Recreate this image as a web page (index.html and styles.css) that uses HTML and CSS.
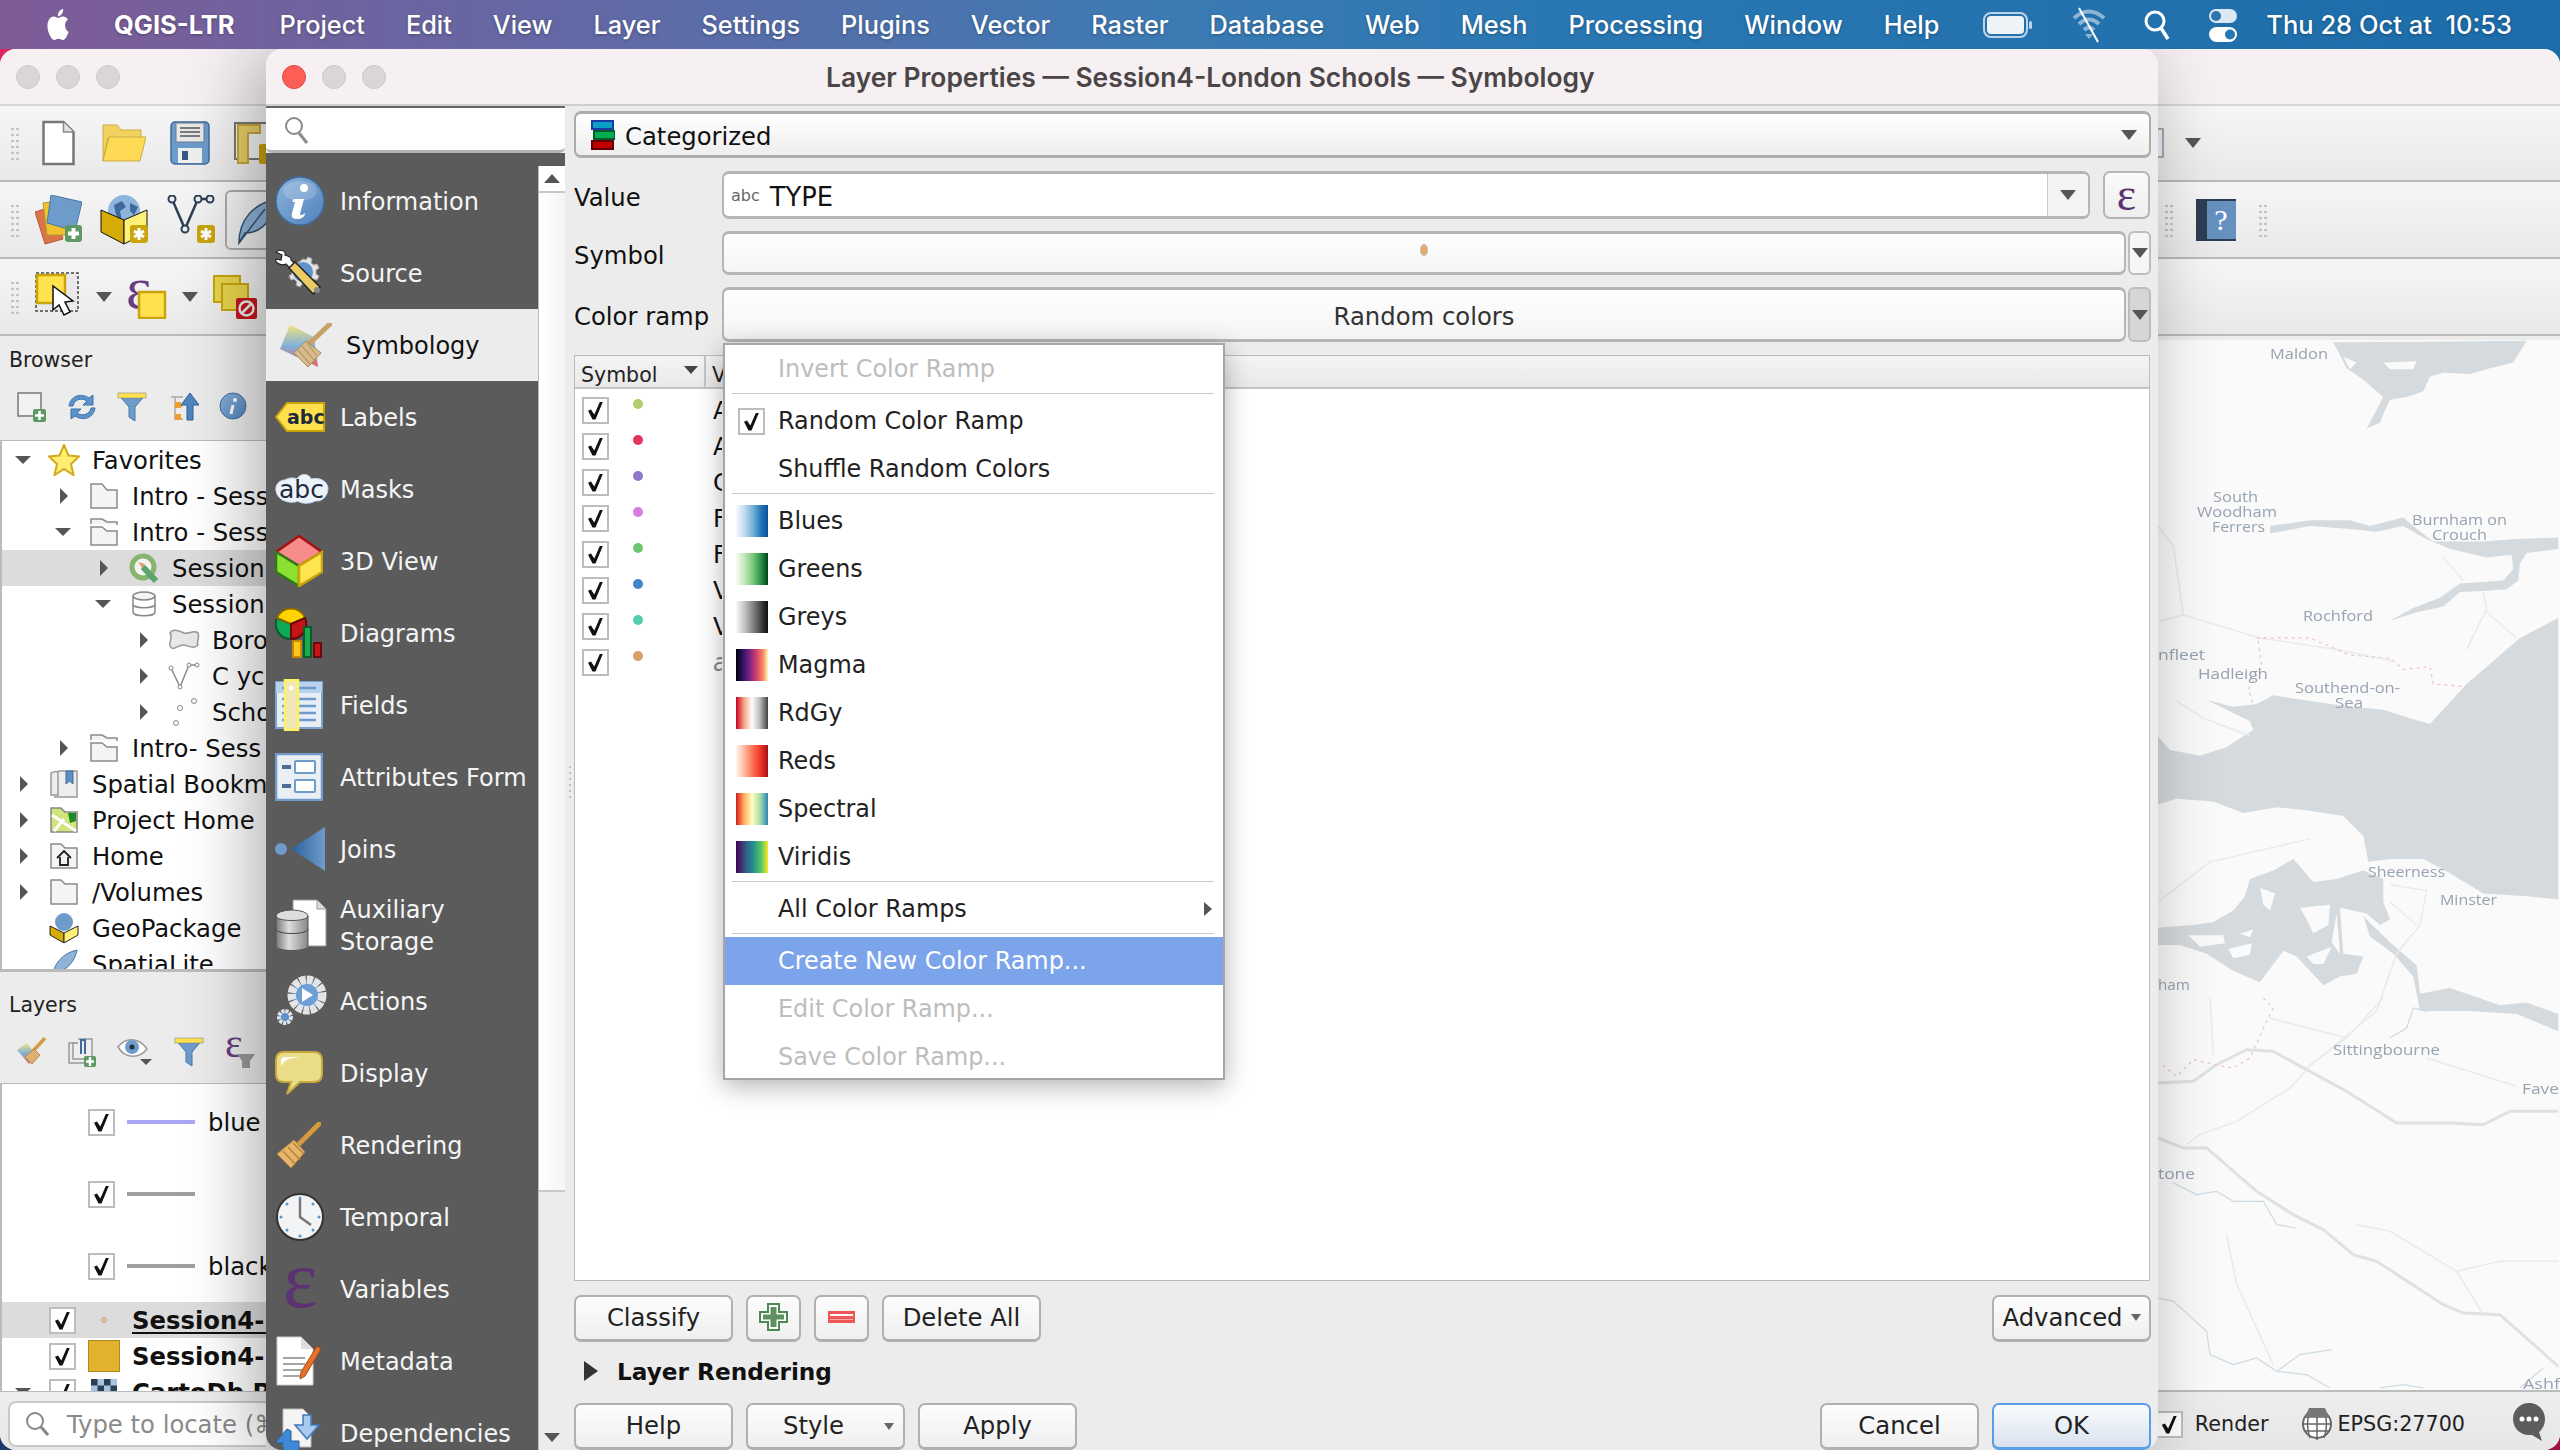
FILE: index.html
```html
<!DOCTYPE html>
<html lang="en">
<head>
<meta charset="utf-8">
<title>QGIS Layer Properties</title>
<link rel="stylesheet" href="styles.css">
</head>
<body>
<svg class="defs" width="0" height="0" aria-hidden="true">
  <defs>
    <linearGradient id="gBlue" x1="0" y1="0" x2="1" y2="1"><stop offset="0" stop-color="#8db4dc"/><stop offset="1" stop-color="#4f82bb"/></linearGradient>
    <linearGradient id="gJoin" x1="1" y1="0" x2="0" y2="0"><stop offset="0" stop-color="#6f9ccb"/><stop offset="1" stop-color="#2c5f98"/></linearGradient>
    <linearGradient id="gDb" x1="0" y1="0" x2="1" y2="0"><stop offset="0" stop-color="#777"/><stop offset=".4" stop-color="#ddd"/><stop offset="1" stop-color="#888"/></linearGradient>
    <linearGradient id="gWash" x1="0" y1="0" x2="0" y2="1"><stop offset="0" stop-color="#f3e27a"/><stop offset=".5" stop-color="#7fb0dc"/><stop offset="1" stop-color="#e8606a"/></linearGradient>
  </defs>
</svg>

<header class="menubar">
  <svg class="apple" width="26" height="31" viewBox="0 0 24 24" preserveAspectRatio="none"><path fill="#fff" d="M12.152 6.896c-.948 0-2.415-1.078-3.96-1.04-2.04.027-3.91 1.183-4.961 3.014-2.117 3.675-.546 9.103 1.519 12.09 1.013 1.454 2.208 3.09 3.792 3.039 1.52-.065 2.09-.987 3.935-.987 1.831 0 2.35.987 3.96.948 1.637-.026 2.676-1.48 3.676-2.948 1.156-1.688 1.636-3.325 1.662-3.415-.039-.013-3.182-1.221-3.22-4.857-.026-3.04 2.48-4.494 2.597-4.559-1.429-2.09-3.623-2.324-4.39-2.376-2-.156-3.675 1.09-4.61 1.09zM15.53 3.83c.843-1.012 1.4-2.427 1.245-3.83-1.207.052-2.662.805-3.532 1.818-.78.896-1.454 2.338-1.273 3.714 1.338.104 2.715-.688 3.559-1.701"/></svg>
  <span class="appname">QGIS-LTR</span>
  <nav class="menus">
    <span>Project</span><span>Edit</span><span>View</span><span>Layer</span><span>Settings</span><span>Plugins</span><span>Vector</span><span>Raster</span><span>Database</span><span>Web</span><span>Mesh</span><span>Processing</span><span>Window</span><span>Help</span>
  </nav>
  <div class="tray">
    <svg width="52" height="28" viewBox="0 0 52 28"><rect x="2" y="2" width="43" height="24" rx="7" fill="none" stroke="#bcd4ea" stroke-width="2"/><rect x="5" y="5" width="37" height="18" rx="4" fill="#eef3f8"/><rect x="47" y="10" width="3" height="8" rx="1.5" fill="#bcd4ea"/></svg>
    <svg width="34" height="36" viewBox="0 0 34 36"><path d="M2 11 Q17 -2 32 11M7 17 Q17 8 27 17M12 23 Q17 18 22 23" fill="none" stroke="#8fb4d4" stroke-width="4"/><path d="M17 32 l-4 -5 h8z" fill="#8fb4d4"/><path d="M7 1 L26 35" stroke="#fff" stroke-width="2"/></svg>
    <svg width="26" height="32" viewBox="0 0 26 32"><circle cx="11" cy="12" r="9" fill="none" stroke="#fff" stroke-width="3"/><path d="M17 19 L24 30" stroke="#fff" stroke-width="3.5"/></svg>
    <svg width="30" height="36" viewBox="0 0 30 36"><rect x="1" y="2" width="28" height="14" rx="7" fill="#dbe8f2"/><circle cx="8" cy="9" r="5" fill="#2a76b0"/><rect x="1" y="20" width="28" height="15" rx="7.5" fill="#fff"/><circle cx="22" cy="27.5" r="5" fill="#2a76b0"/></svg>
    <span class="clock">Thu 28 Oct at&nbsp; 10:53</span>
  </div>
</header>

<main class="mainwin">
  <div class="titlebar">
    <i class="light"></i><i class="light"></i><i class="light"></i>
  </div>

  <div class="tb tb-a">
    <i class="grip"></i>
    <svg width="36" height="46" viewBox="0 0 36 46"><path d="M1.5 2h20l10 10v32h-30z" fill="#fff" stroke="#777" stroke-width="2.5"/><path d="M21.500 2v10h10" fill="#e4e4e4" stroke="#888" stroke-width="1.500"/></svg>
    <svg width="44" height="40" viewBox="0 0 44 40"><path d="M1 38V2h14l4 5h20v8H6z" fill="#f2d25e" stroke="#c9ab45"/><path d="M1 38 7 14h37l-6 24z" fill="#ffdb55" stroke="#c9ab45"/></svg>
    <svg width="40" height="44" viewBox="0 0 40 44"><rect x="1" y="1" width="38" height="42" rx="4" fill="#6d9ccb" stroke="#3e6b9b" stroke-width="1.500"/><rect x="6" y="2" width="28" height="19" fill="#e8e8e8" stroke="#6a7c90"/><path d="M10 7h20M10 11h20M10 15h20" stroke="#555" stroke-width="1.500"/><rect x="8" y="27" width="24" height="15" fill="#f0f0f0"/><rect x="12" y="30" width="6" height="9" fill="#355a82"/></svg>
    <svg width="44" height="44" viewBox="0 0 44 44"><rect x="1" y="2" width="34" height="36" fill="#f4f4f4" stroke="#777" stroke-width="2"/><path d="M4 4h22v8H14v30H4z" fill="#e8cf68" stroke="#c9a43c" stroke-width="2"/><rect x="25" y="23" width="12" height="20" rx="2" fill="#c9a010"/></svg>
    <span class="tb-end tb-end-a"><i class="tb-box"></i><i class="tri"></i></span>
  </div>

  <div class="tb tb-b">
    <i class="grip"></i>
    <svg width="47" height="50" viewBox="0 0 47 50"><path d="M0 17 19 11 28 44 10 49z" fill="#d9734a" stroke="#b65a36"/><path d="M8 8 30 5 32 40 12 40z" fill="#eec32e" stroke="#b5952a"/><path d="M16 0 47 7 40 36 12 28z" fill="#6d9ccb" stroke="#4a77a6"/><rect x="30" y="30" width="17" height="17" rx="3" fill="#5e9865"/><path d="M38.500 33v11M33 38.500h11" stroke="#fff" stroke-width="4"/></svg>
    <svg width="48" height="50" viewBox="0 0 48 50"><circle cx="24" cy="16" r="16" fill="#8db4dc"/><path d="M14 10l8-4 4 6-6 4 2 10-6-6zM30 8l8 4-4 8-4-4z" fill="#3d6a9a"/><path d="M1 15 24 25v24L1 37z" fill="#d6ab06" stroke="#111"/><path d="M47 15 24 25v24l23-12z" fill="#fff07a" stroke="#111"/><rect x="30" y="30" width="18" height="18" rx="3" fill="#c9a40a"/><path d="M39 33v12M34 36l10 6M44 36l-10 6" stroke="#fff" stroke-width="3"/></svg>
    <svg class="m-v" width="48" height="50" viewBox="0 0 48 50"><path d="M5 4 18 34 31 4H43" fill="none" stroke="#2c3f55" stroke-width="2.500"/><circle cx="5" cy="4" r="3.500" fill="#eee" stroke="#2c3f55" stroke-width="2"/><circle cx="18" cy="34" r="3.500" fill="#eee" stroke="#2c3f55" stroke-width="2"/><circle cx="31" cy="4" r="3.500" fill="#eee" stroke="#2c3f55" stroke-width="2"/><circle cx="43" cy="4" r="3.500" fill="#eee" stroke="#2c3f55" stroke-width="2"/><rect x="30" y="30" width="18" height="18" rx="3" fill="#c9a40a"/><path d="M39 33v12M34 36l10 6M44 36l-10 6" stroke="#fff" stroke-width="3"/></svg>
    <span class="tb-pencil"><svg width="50" height="50" viewBox="0 0 50 50"><path d="M6 48C6 25 20 8 45 4 40 22 30 38 12 38z" fill="#8eb3d6" stroke="#33506e" stroke-width="1.500"/><path d="M6 48 32 14" stroke="#33506e" stroke-width="1.500"/></svg></span>
    <span class="tb-end tb-end-b"><i class="grip"></i><svg width="40" height="42" viewBox="0 0 40 42"><rect width="40" height="42" fill="#2c3e52"/><rect x="11" y="2" width="29" height="38" fill="#6690bf"/><text x="25" y="31" class="helpq">?</text></svg><i class="grip"></i></span>
  </div>

  <div class="tb tb-c">
    <i class="grip"></i>
    <svg width="46" height="50" viewBox="0 0 46 50"><rect x="1" y="1" width="42" height="38" fill="#e9e9e9" stroke="#444" stroke-width="1.500" stroke-dasharray="3 2"/><rect x="2" y="3" width="28" height="28" fill="#ffe24d" stroke="#c9a40a" stroke-width="2.500"/><path d="M18 15v24l6-5 5 10 6-3-5-10 8-1z" transform="translate(0 -1)" fill="#fff" stroke="#111" stroke-width="1.500"/></svg>
    <i class="tri"></i>
    <svg width="40" height="44" viewBox="0 0 40 44"><text x="-1" y="33" class="eps-lg">ε</text><rect x="12" y="17" width="26" height="26" fill="#ffe24d" stroke="#c9a40a" stroke-width="2.500"/></svg>
    <i class="tri"></i>
    <svg width="44" height="44" viewBox="0 0 44 44"><rect x="1" y="1" width="26" height="26" fill="#e8d64e" stroke="#c9a40a" stroke-width="2"/><rect x="9" y="9" width="26" height="26" fill="#e8d64e" stroke="#c9a40a" stroke-width="2"/><rect x="23" y="23" width="21" height="21" rx="2" fill="#c4161c"/><circle cx="33.500" cy="33.500" r="7" fill="none" stroke="#eee" stroke-width="2.500"/><path d="M29 38l9-9" stroke="#eee" stroke-width="2.500"/></svg>
  </div>

  <div class="workarea">
    <aside class="docks">
      <section class="dock dock-browser">
        <h2 class="dock-title">Browser</h2>
        <div class="dock-tools">
          <svg width="30" height="30" viewBox="0 0 30 30"><rect x="1" y="1" width="23" height="23" fill="#f2f2f2" stroke="#777" stroke-width="1.500"/><rect x="16" y="17" width="13" height="13" rx="2" fill="#5e9865"/><path d="M22.500 19v9M18 23.500h9" stroke="#fff" stroke-width="2.500"/></svg>
          <svg width="30" height="30" viewBox="0 0 30 30"><path d="M2 14C3 5 13 0 22 6l4-3v10H16l4-4C14 5 7 8 6 14zM28 16C27 25 17 30 8 24l-4 3V17h10l-4 4c6 4 13 1 14-5z" fill="#5b93cc" stroke="#3f72a8"/></svg>
          <svg width="30" height="30" viewBox="0 0 30 30"><path d="M1 2h28L18 15v14l-6-4V15z" fill="#6d9ccb" stroke="#4a77a6"/><rect x="1" y="1" width="28" height="5" fill="#ffe24d" stroke="#777" stroke-width=".5"/></svg>
          <svg width="32" height="30" viewBox="0 0 32 30"><path d="M4 5h12M8 5v22h8M8 14h8" fill="none" stroke="#aaa" stroke-width="1.500"/><rect x="8" y="10" width="6" height="6" fill="#f39c2c"/><rect x="8" y="22" width="6" height="6" fill="#f39c2c"/><path d="M14 13 23 1l9 12h-6v15h-6V13z" fill="#4f86bf" stroke="#2d5f94"/></svg>
          <svg width="28" height="28" viewBox="0 0 28 28"><circle cx="14" cy="14" r="13" fill="url(#gBlue)" stroke="#3f6c9e"/><circle cx="16" cy="8" r="2" fill="#fff"/><path d="M14 13 12 22" stroke="#fff" stroke-width="3"/></svg>
        </div>
        <div class="tree">
          <div class="row l0"><i class="ar-d"></i><span class="ri"><svg width="32" height="32" viewBox="0 0 32 32"><path d="M16 1l4.500 10.500L31 12.500l-8 7.500 2.500 11L16 25l-9.500 6L9 20l-8-7.500 10.500-1z" fill="#ffee70" stroke="#d4a81c" stroke-width="2"/></svg></span><span class="rt">Favorites</span></div>
          <div class="row l1"><i class="ar-r"></i><span class="ri"><svg width="28" height="26" viewBox="0 0 28 26"><path d="M1 25V1h11l5 6h10v18z" fill="#f4f4f4" stroke="#8a8a8a" stroke-width="1.500"/></svg></span><span class="rt">Intro - Sess</span></div>
          <div class="row l1"><i class="ar-d"></i><span class="ri"><svg width="28" height="28" viewBox="0 0 28 28"><path d="M1 6V1h11l5 3h10v3M1 27V9h11l5 4h10v14z" fill="#f4f4f4" stroke="#8a8a8a" stroke-width="1.500"/></svg></span><span class="rt">Intro - Sess</span></div>
          <div class="row l2 sel"><i class="ar-r"></i><span class="ri"><svg width="32" height="30" viewBox="0 0 32 30"><circle cx="15" cy="14" r="11" fill="#f4f4f4" stroke="#88b56e" stroke-width="5"/><path d="M10 9l7 2-2 5z" fill="#e39a6a"/><path d="M15 14 28 28" stroke="#5aa469" stroke-width="6"/></svg></span><span class="rt">Session</span></div>
          <div class="row l2"><i class="ar-d"></i><span class="ri"><svg width="26" height="26" viewBox="0 0 26 26"><ellipse cx="13" cy="5" rx="11" ry="4" fill="#f4f4f4" stroke="#888" stroke-width="1.500"/><path d="M2 5v16c0 5 22 5 22 0V5M2 13c0 5 22 5 22 0" fill="none" stroke="#888" stroke-width="1.500"/></svg></span><span class="rt">Session</span></div>
          <div class="row l3"><i class="ar-r"></i><span class="ri"><svg width="32" height="24" viewBox="0 0 32 24"><path d="M2 5C5 0 12 3 16 5c4 2 10-4 14 0 2 6-2 8 0 12-5 5-10 0-15 0S4 24 2 18C1 13 5 10 2 5z" fill="#e8e8e8" stroke="#999" stroke-width="1.500"/></svg></span><span class="rt">Boro</span></div>
          <div class="row l3"><i class="ar-r"></i><span class="ri"><svg width="32" height="28" viewBox="0 0 32 28"><path d="M3 6l9 19L21 3h8" fill="none" stroke="#8a8a8a" stroke-width="1.500"/><circle cx="3" cy="6" r="2" fill="#fff" stroke="#888"/><circle cx="12" cy="25" r="2" fill="#fff" stroke="#888"/><circle cx="21" cy="3" r="2" fill="#fff" stroke="#888"/><circle cx="29" cy="3" r="2" fill="#fff" stroke="#888"/></svg></span><span class="rt">C ycl</span></div>
          <div class="row l3"><i class="ar-r"></i><span class="ri"><svg width="30" height="28" viewBox="0 0 30 28"><circle cx="11" cy="10" r="2.500" fill="#fff" stroke="#888"/><circle cx="25" cy="3" r="2.500" fill="#fff" stroke="#888"/><circle cx="7" cy="25" r="2.500" fill="#fff" stroke="#888"/></svg></span><span class="rt">Scho</span></div>
          <div class="row l1"><i class="ar-r"></i><span class="ri"><svg width="28" height="28" viewBox="0 0 28 28"><path d="M1 6V1h11l5 3h10v3M1 27V9h11l5 4h10v14z" fill="#f4f4f4" stroke="#8a8a8a" stroke-width="1.500"/></svg></span><span class="rt">Intro- Sess</span></div>
          <div class="row l0"><i class="ar-r"></i><span class="ri"><svg width="28" height="28" viewBox="0 0 28 28"><path d="M1 3C5 1 8 1 8 3v22H1zM8 1h19v26H4" fill="#eee" stroke="#999" stroke-width="1.500"/><path d="M16 1h7v13l-3.500-3-3.500 3z" fill="#5f8fc4" stroke="#3f6c9e"/></svg></span><span class="rt">Spatial Bookm</span></div>
          <div class="row l0"><i class="ar-r"></i><span class="ri"><svg width="28" height="26" viewBox="0 0 28 26"><path d="M1 25V1h10l4 4h12v20z" fill="#cfe57a" stroke="#888" stroke-width="1.500"/><path d="M2 8 26 24M4 24 14 12" stroke="#fff" stroke-width="3"/><path d="M18 6h8v8l-6 2z" fill="#1f8a28"/></svg></span><span class="rt">Project Home</span></div>
          <div class="row l0"><i class="ar-r"></i><span class="ri"><svg width="28" height="26" viewBox="0 0 28 26"><path d="M1 25V1h10l4 4h12v20z" fill="#f4f4f4" stroke="#8a8a8a" stroke-width="1.500"/><path d="M7 15l7-7 7 7M10 14v8h8v-8" fill="none" stroke="#222" stroke-width="1.800"/></svg></span><span class="rt">Home</span></div>
          <div class="row l0"><i class="ar-r"></i><span class="ri"><svg width="28" height="26" viewBox="0 0 28 26"><path d="M1 25V1h10l4 4h12v20z" fill="#f4f4f4" stroke="#8a8a8a" stroke-width="1.500"/></svg></span><span class="rt">/Volumes</span></div>
          <div class="row l0"><i class="ar-none"></i><span class="ri"><svg width="30" height="30" viewBox="0 0 30 30"><circle cx="15" cy="9" r="9" fill="#6d9ccb"/><path d="M1 13 15 20v10L1 22z" fill="#d6ab06" stroke="#222"/><path d="M29 13 15 20v10l14-8z" fill="#fff07a" stroke="#222"/></svg></span><span class="rt">GeoPackage</span></div>
          <div class="row l0"><i class="ar-none"></i><span class="ri"><svg width="30" height="30" viewBox="0 0 30 30"><path d="M3 29C4 15 14 4 28 1 26 12 18 22 8 22z" fill="#8eb3d6" stroke="#4a77a6"/></svg></span><span class="rt">SpatiaLite</span></div>
        </div>
      </section>
      <section class="dock dock-layers">
        <h2 class="dock-title dock-title-l">Layers</h2>
        <div class="dock-tools">
          <svg width="30" height="28" viewBox="0 0 30 28"><path d="M0 13 10 6l9 12-7 9z" fill="url(#gWash)"/><path d="M28 1 16 14" stroke="#d49a44" stroke-width="3.500"/><path d="M17 12 8 20l7 7 8-9z" fill="#e0b070" stroke="#b88a4a"/></svg>
          <svg width="28" height="30" viewBox="0 0 28 30"><path d="M10 6H1v20h17" fill="none" stroke="#999" stroke-width="1.500"/><path d="M10 2h14v20H5V6h5" fill="#eee" stroke="#999" stroke-width="1.500"/><path d="M13 17V3h4v14" fill="none" stroke="#3f6c9e" stroke-width="2"/><rect x="16" y="19" width="12" height="11" rx="2" fill="#5e9865"/><path d="M22 20v9M18 24.500h8" stroke="#fff" stroke-width="2.500"/></svg>
          <svg width="36" height="28" viewBox="0 0 36 28"><path d="M1 10C8 0 22 0 30 12 22 22 8 22 1 10z" fill="#fff" stroke="#999" stroke-width="1.500"/><circle cx="15" cy="10" r="7" fill="#6d9ccb"/><circle cx="15" cy="10" r="2.500" fill="#233"/><path d="M23 22h12l-6 6z" fill="#555"/></svg>
          <svg width="30" height="30" viewBox="0 0 30 30"><path d="M1 2h28L18 15v14l-6-4V15z" fill="#6d9ccb" stroke="#4a77a6"/><rect x="1" y="1" width="28" height="5" fill="#ffe24d" stroke="#777" stroke-width=".5"/></svg>
          <svg width="32" height="32" viewBox="0 0 32 32"><text x="0" y="20" class="eps-md">ε</text><path d="M12 17h18l-5 7v7h-8v-7z" fill="#999"/></svg>
        </div>
        <div class="tree tree-layers">
          <div class="lrow"><i class="cb"></i><i class="ln ln-blue"></i><span class="rt">blue</span></div>
          <div class="lrow"><i class="cb"></i><i class="ln"></i></div>
          <div class="lrow"><i class="cb"></i><i class="ln"></i><span class="rt">black</span></div>
          <div class="row-l sel"><i class="ar-none"></i><i class="cb"></i><span class="rsym"><i class="lsdot"></i></span><b class="rt ul">Session4-L</b></div>
          <div class="row-l"><i class="ar-none"></i><i class="cb"></i><span class="rsym"><i class="lsq"></i></span><b class="rt">Session4-</b></div>
          <div class="row-l"><i class="ar-d"></i><i class="cb"></i><span class="rsym"><svg width="26" height="26" viewBox="0 0 4 4"><rect width="4" height="4" fill="#a8c4e0"/><path d="M0 0h1v1H0zM2 0h1v1H2zM1 1h1v1H1zM3 1h1v1H3z" fill="#2c3f55"/></svg></span><b class="rt">CartoDb P</b></div>
        </div>
      </section>
    </aside>

    <div class="mapview">
      <svg class="mapsvg" width="402" height="1052" viewBox="2158 340 402 1052">
        <rect x="2158" y="340" width="402" height="1052" fill="#f9faf9"/>
        <g class="soft" transform="translate(2150 330) scale(.3333 .574)">
          <path class="water" d="M550 25 820 24 1130 22 1090 60 1020 70 960 80 880 78 840 85 820 110 770 120 720 125 700 150 690 165 650 175 700 120 640 90 590 70Z"/>
          <path class="land" d="M700 60 800 58 790 72 720 72ZM580 50 620 60 600 72Z"/>
          <path class="water" d="M360 345 480 335 600 335 660 345 760 330 800 350 850 372 1000 372 1090 368 1225 365 1225 385 1130 392 1110 410 1105 440 1070 455 1000 458 930 460 880 485 800 495 720 510 790 488 870 470 930 445 1060 440 1090 420 1085 395 1010 400 900 385 820 365 760 345 680 355 600 350 480 345 360 358Z"/>
          <path class="water" d="M24 712 60 735 150 745 230 730 310 700 300 685 230 665 170 648 250 660 320 655 370 640 480 650 600 660 700 665 780 680 840 690 950 620 1050 570 1110 540 1225 505 1225 995 1130 990 1000 985 900 950 820 925 720 925 655 930 640 885 580 850 470 840 380 835 280 845 190 825 80 820 24 830Z"/>
          <path class="water" d="M24 1045 130 1040 190 1035 250 1015 285 990 300 960 370 945 430 925 490 965 560 960 640 945 700 960 700 1000 720 1030 690 1040 650 1020 570 1010 580 1090 640 1095 620 1125 570 1130 520 1145 440 1095 400 1085 330 1140 250 1120 170 1090 90 1075 24 1075Z"/>
          <path class="water" d="M640 1025 720 1070 800 1110 810 1160 900 1150 1050 1180 1130 1175 1225 1195 1225 1225 1100 1195 960 1190 810 1190 790 1130 730 1090 660 1060Z"/>
          <path class="land" d="M450 1010 540 1005 535 1040 490 1055 470 1030ZM330 975 375 985 360 1015 340 1005ZM115 1058 220 1058 225 1072 150 1078ZM235 1082 305 1072 300 1092 250 1098ZM470 1095 545 1078 520 1108 490 1108ZM270 1055 310 1048 300 1062ZM560 1020 570 1090 545 1070Z"/>
          <path class="road" d="M24 345 70 380 100 500 30 510M100 500 330 540 560 560 730 580M880 400 940 440M1000 460 1010 490 950 560M1000 490 1100 540M80 650 160 680 300 710M24 1000 180 930 480 890M720 970 830 980 810 1040 740 1090 680 1190 470 1290M720 1000 800 1040"/>
          <path class="dash" d="M320 540 480 540 600 570 720 575 760 595 840 590 850 620 950 625M325 545 335 590 295 630 310 655"/>
        </g>
        <g class="soft" transform="translate(2150 1000) scale(.3333)">
          <path class="mway" d="M24 255 130 250 200 200 290 155 370 160 470 215 590 280 740 375 900 375 1000 380 1080 340 1225 340"/>
          <path class="mway" d="M24 420 100 450 170 450 320 580 430 650 520 695 610 770 680 790 880 920 940 945 1050 950 1225 1105"/>
          <path class="road" d="M470 215 420 270 260 370 150 410 110 440M620 680 720 700 920 820 1050 790 1225 790M920 820 1000 950M230 710 260 860 370 1100M480 200 590 120 700 0M180 0 190 170M360 60 590 120M830 180 1100 265"/>
          <path class="river" d="M70 555 140 590 200 580 250 610 340 610 380 680 440 690M24 900 70 910 170 1000 180 1070 250 1100 320 1080 380 1120 470 1130 540 1170M380 1120 450 1070 545 1055M720 120 770 90 790 30 830 40M1110 1170 1180 1110M690 1170 760 1160 820 1170"/>
          <path class="dash" d="M340 0 370 30 350 70 300 180 250 210 220 205 130 185 80 235 30 195"/>
        </g>
        <g class="maplabels">
          <text x="2270" y="361" textLength="58" lengthAdjust="spacingAndGlyphs">Maldon</text>
          <text x="2213" y="504" textLength="45" lengthAdjust="spacingAndGlyphs">South</text>
          <text x="2197" y="519" textLength="80" lengthAdjust="spacingAndGlyphs">Woodham</text>
          <text x="2212" y="534" textLength="53" lengthAdjust="spacingAndGlyphs">Ferrers</text>
          <text x="2412" y="527" textLength="95" lengthAdjust="spacingAndGlyphs">Burnham on</text>
          <text x="2432" y="542" textLength="55" lengthAdjust="spacingAndGlyphs">Crouch</text>
          <text x="2303" y="623" textLength="70" lengthAdjust="spacingAndGlyphs">Rochford</text>
          <text x="2158" y="662" textLength="47" lengthAdjust="spacingAndGlyphs">nfleet</text>
          <text x="2198" y="681" textLength="70" lengthAdjust="spacingAndGlyphs">Hadleigh</text>
          <text x="2295" y="695" textLength="105" lengthAdjust="spacingAndGlyphs">Southend-on-</text>
          <text x="2335" y="710" textLength="28" lengthAdjust="spacingAndGlyphs">Sea</text>
          <text x="2368" y="879" textLength="77" lengthAdjust="spacingAndGlyphs">Sheerness</text>
          <text x="2440" y="907" textLength="57" lengthAdjust="spacingAndGlyphs">Minster</text>
          <text x="2158" y="992" textLength="32" lengthAdjust="spacingAndGlyphs">ham</text>
          <text x="2333" y="1057" textLength="107" lengthAdjust="spacingAndGlyphs">Sittingbourne</text>
          <text x="2522" y="1096" textLength="37" lengthAdjust="spacingAndGlyphs">Fave</text>
          <text x="2158" y="1181" textLength="37" lengthAdjust="spacingAndGlyphs">tone</text>
          <text x="2523" y="1391" textLength="37" lengthAdjust="spacingAndGlyphs">Ashf</text>
        </g>
      </svg>
    </div>
  </div>

  <footer class="statusbar">
    <div class="locator">
      <svg width="24" height="26" viewBox="0 0 24 26"><circle cx="10" cy="10" r="8" fill="none" stroke="#888" stroke-width="2"/><path d="M16 16l7 8" stroke="#888" stroke-width="3"/></svg>
      <span>Type to locate (⌘</span>
    </div>
    <div class="status-right">
      <i class="cb cb-sm"></i><span class="st-render">Render</span>
      <svg class="st-globe" width="32" height="38" viewBox="0 0 32 38"><circle cx="16" cy="19" r="14" fill="#fff" stroke="#666" stroke-width="2"/><path d="M2 19h28M4 12h24M4 26h24M16 3v32M9 5q-5 14 0 28M23 5q5 14 0 28" fill="none" stroke="#666" stroke-width="1.500"/><path d="M8 3h16l4 9H4z" fill="#777"/></svg>
      <span>EPSG:27700</span>
      <svg class="st-msg" width="34" height="40" viewBox="0 0 34 40"><path d="M17 1C8 1 1 8 1 17s7 16 16 16h3l10 6-3-9c4-3 6-8 6-13C33 8 26 1 17 1z" fill="#5d5d5d"/><circle cx="10" cy="17" r="2.500" fill="#fff"/><circle cx="17" cy="17" r="2.500" fill="#fff"/><circle cx="24" cy="17" r="2.500" fill="#fff"/></svg>
    </div>
  </footer>
</main>

<section class="dialog">
  <div class="dlg-title">
    <i class="light light-red"></i><i class="light"></i><i class="light"></i>
    <h1>Layer Properties — Session4-London Schools — Symbology</h1>
  </div>
  <div class="dlg-body">
    <aside class="nav">
      <div class="nav-search"><svg width="26" height="30" viewBox="0 0 26 30"><circle cx="11" cy="11" r="8" fill="none" stroke="#8a8a8a" stroke-width="2"/><path d="M16 18l8 10" stroke="#8a8a8a" stroke-width="3"/></svg></div>
      <div class="nav-main">
        <ul class="nav-list">
          <li class="nav-item"><svg class="ni" width="50" height="50" viewBox="0 0 50 50"><circle cx="25" cy="25" r="24" fill="url(#gBlue)" stroke="#3f6c9e" stroke-width="1.500"/><ellipse cx="25" cy="15" rx="17" ry="10" fill="#fff" opacity=".18"/><circle cx="29" cy="12" r="4" fill="#fff"/><path d="M19 23h10l-4 15c0 2 3 1 5-1 0 4-4 6-8 6-5 0-6-3-5-6l3-11h-3z" fill="#fff"/></svg><span>Information</span></li>
          <li class="nav-item"><svg class="ni" width="50" height="50" viewBox="0 0 50 50"><path d="M28 11l3 1 2-3 4 2-1 4 3 2 3-1 2 4-3 2v4l3 2-2 4-4-1-2 3 1 3-4 2-2-3h-4l-2 3-4-2 1-3-3-3-3 1-2-4 3-2v-4l-3-2 2-4 4 1z" fill="#e4e4e4" stroke="#aaa"/><circle cx="28" cy="24" r="10" fill="#5f92c8"/><path d="M10 7 C12 2 3 1 1 4l6 3-1 5-6-1c1 5 7 7 11 5l14 15 6-4L16 12c1-2-2-4-6-5z" fill="#fff" stroke="#222" stroke-width="1.200"/><path d="M20 14 45 39 38 46 14 20z" fill="#eccb66" stroke="#222" stroke-width="1.500"/><circle cx="42" cy="42" r="3" fill="#888"/></svg><span>Source</span></li>
          <li class="nav-item nav-sel"><svg class="ni" width="52" height="44" viewBox="0 0 52 44"><path d="M0 26 10 2 34 14 38 44z" fill="url(#gWash)"/><path d="M50 1 28 22" stroke="#c8a26a" stroke-width="5" stroke-linecap="round"/><path d="M26 18 14 30l14 14 13-14z" fill="#d9bc8e" stroke="#a98a5a"/><path d="M22 23l12 14M18 27l12 14M27 20l10 13" stroke="#b5976a" stroke-width="1.200"/></svg><span>Symbology</span></li>
          <li class="nav-item"><svg class="ni" width="50" height="30" viewBox="0 0 50 30"><path d="M12 1h37v28H12L1 15z" fill="#ffe14d" stroke="#c9a40a" stroke-width="2"/><text x="12" y="22" class="abc">abc</text></svg><span>Labels</span></li>
          <li class="nav-item"><svg class="ni" width="54" height="36" viewBox="0 0 54 36"><path d="M10 9c3-2 8-3 12-1 3-6 12-6 14 0 7-2 16 1 17 9 0 8-6 14-13 13-4 3-14 3-17 0-6 3-20 1-22-10C0 14 4 9 10 9z" fill="#eef3fb" stroke="#cdd9ec"/><text x="4" y="27" class="abc abc-m">abc</text></svg><span>Masks</span></li>
          <li class="nav-item"><svg class="ni" width="48" height="52" viewBox="0 0 48 52"><path d="M24 1 47 17 24 31 1 17z" fill="#f58b8b" stroke="#a80f0f" stroke-width="2.500"/><path d="M1 17 24 31V51L1 37z" fill="#8be032" stroke="#2f7a18" stroke-width="2.500"/><path d="M47 17 24 31V51L47 37z" fill="#ffe54d" stroke="#c9a40a" stroke-width="2.500"/></svg><span>3D View</span></li>
          <li class="nav-item"><svg class="ni" width="48" height="50" viewBox="0 0 48 50"><path d="M16 16 2 10a15 15 0 0 0 14 21z" fill="#0faa55" stroke="#0a5a2e" stroke-width="2"/><path d="M16 16 30 10A15 15 0 0 0 2 10z" fill="#ffd400" stroke="#8a6a00" stroke-width="2"/><path d="M16 16 30 10A15 15 0 0 1 16 31z" fill="#c71414" stroke="#6a0a0a" stroke-width="2"/><rect x="18" y="33" width="8" height="16" fill="#ffc61a" stroke="#c28a00" stroke-width="2"/><rect x="29" y="19" width="7" height="30" fill="#1aab4b" stroke="#0a5a2e" stroke-width="2"/><rect x="39" y="35" width="7" height="14" fill="#c71414" stroke="#6a0a0a" stroke-width="2"/></svg><span>Diagrams</span></li>
          <li class="nav-item"><svg class="ni" width="48" height="52" viewBox="0 0 48 52"><rect x="1" y="3" width="46" height="46" fill="#e8eef6" stroke="#7ba3cf" stroke-width="2"/><rect x="1" y="3" width="46" height="11" fill="#b9d2ec"/><path d="M7 9h34M7 20h34M7 27h34M7 34h34M7 41h34" stroke="#6c9bcb" stroke-width="2.500"/><rect x="10" y="1" width="13" height="50" fill="#efe7b8" stroke="#fff25a" stroke-width="2.500"/><rect x="14" y="7" width="4" height="4" fill="#fff"/></svg><span>Fields</span></li>
          <li class="nav-item"><svg class="ni" width="48" height="48" viewBox="0 0 48 48"><rect x="1" y="1" width="46" height="46" fill="#eaeff6" stroke="#6f9ccb" stroke-width="2.500"/><path d="M7 14h9M7 33h9" stroke="#4a6f96" stroke-width="4"/><rect x="20" y="8" width="20" height="12" rx="1" fill="#fff" stroke="#6f9ccb" stroke-width="2"/><rect x="20" y="27" width="20" height="12" rx="1" fill="#fff" stroke="#6f9ccb" stroke-width="2"/></svg><span>Attributes Form</span></li>
          <li class="nav-item"><svg class="ni" width="50" height="44" viewBox="0 0 50 44"><circle cx="6" cy="22" r="6" fill="#6f9ccb"/><path d="M16 22 50 0V44z" fill="url(#gJoin)"/></svg><span>Joins</span></li>
          <li class="nav-item nav-tall"><svg class="ni" width="52" height="52" viewBox="0 0 52 52"><path d="M18 1h24l9 9v37H18z" fill="#fff" stroke="#999"/><path d="M42 1v9h9" fill="#ddd" stroke="#999"/><ellipse cx="17" cy="17" rx="16" ry="6" fill="#ddd" stroke="#555"/><path d="M1 17v30c0 6 32 6 32 0V17c0 6-32 6-32 0z" fill="url(#gDb)" stroke="#555"/><path d="M1 30c0 6 32 6 32 0" fill="none" stroke="#444"/></svg><span>Auxiliary<br>Storage</span></li>
          <li class="nav-item"><svg class="ni" width="52" height="52" viewBox="0 0 52 52"><circle cx="32" cy="20" r="15" fill="#5f92c8" stroke="#e4e4e4" stroke-width="9" stroke-dasharray="6 1"/><circle cx="32" cy="20" r="11" fill="#6d9fd6"/><path d="M27 13v14l11-7z" fill="#fff"/><circle cx="10" cy="42" r="6" fill="#5f92c8" stroke="#e4e4e4" stroke-width="4" stroke-dasharray="3 1"/></svg><span>Actions</span></li>
          <li class="nav-item"><svg class="ni" width="48" height="44" viewBox="0 0 48 44"><path d="M9 1h30c5 0 8 3 8 8v14c0 5-3 8-8 8H25L12 43l4-12H9c-5 0-8-3-8-8V9c0-5 3-8 8-8z" fill="#e9dd89" stroke="#c9a83c" stroke-width="2"/><path d="M6 16V9c0-2 2-3 4-3h16C14 7 8 9 6 16z" fill="#fff"/></svg><span>Display</span></li>
          <li class="nav-item"><svg class="ni" width="46" height="46" viewBox="0 0 46 46"><path d="M44 2 22 24" stroke="#d69a3e" stroke-width="5" stroke-linecap="round"/><path d="M19 18 2 32l14 14 14-16z" fill="#e8b56c" stroke="#b5843c"/><path d="M8 29l12 13M13 25l12 13M18 21l11 11" stroke="#b5843c" stroke-width="1.500"/></svg><span>Rendering</span></li>
          <li class="nav-item"><svg class="ni" width="50" height="50" viewBox="0 0 50 50"><circle cx="25" cy="25" r="23" fill="#f2f4f6" stroke="#333" stroke-width="2"/><circle cx="25" cy="6" r="1.500" fill="#5f92c8"/><circle cx="25" cy="44" r="1.500" fill="#5f92c8"/><circle cx="6" cy="25" r="1.500" fill="#5f92c8"/><circle cx="44" cy="25" r="1.500" fill="#5f92c8"/><circle cx="12" cy="12" r="1.500" fill="#5f92c8"/><circle cx="38" cy="12" r="1.500" fill="#5f92c8"/><circle cx="12" cy="38" r="1.500" fill="#5f92c8"/><circle cx="38" cy="38" r="1.500" fill="#5f92c8"/><path d="M25 7v18l11 8" fill="none" stroke="#777" stroke-width="2.500"/></svg><span>Temporal</span></li>
          <li class="nav-item"><svg class="ni" width="46" height="46" viewBox="0 0 46 46"><text x="8" y="41" class="eps-nav">ε</text></svg><span>Variables</span></li>
          <li class="nav-item"><svg class="ni" width="46" height="50" viewBox="0 0 46 50"><path d="M2 1h24l12 12v36H2z" fill="#fff" stroke="#ccc"/><path d="M26 1v12h12" fill="#ddd"/><path d="M8 22h22M8 28h22M8 34h22M8 40h22" stroke="#888" stroke-width="1.500"/><path d="M26 36 42 10l4 3-16 27-5 3z" fill="#e8702a" stroke="#a84a14"/></svg><span>Metadata</span></li>
          <li class="nav-item"><svg class="ni" width="52" height="52" viewBox="0 0 52 52"><path d="M8 2h20l8 8v30H8z" fill="#f4f4f4" stroke="#bbb"/><path d="M28 8h8v10h8L32 32 20 18h8z" fill="#a9c9ee" stroke="#3f78b8" stroke-width="1.500"/><path d="M16 24v10h8v18H8V36H0l12-14z" fill="#3f88d8" stroke="#2c5f98"/></svg><span>Dependencies</span></li>
        </ul>
        <div class="nav-scroll">
          <div class="sc-btn"><i class="sc-up"></i></div>
          <div class="sc-track"></div>
          <div class="sc-lower"><i class="sc-down"></i></div>
        </div>
      </div>
    </aside>

    <div class="pane">
      <i class="split-dots"></i>
      <div class="combo combo-top">
        <svg class="cat-ic" width="24" height="30" viewBox="0 0 24 30"><rect x="1" y="1" width="21" height="8" fill="#0a9fc4" stroke="#1a3aa8" stroke-width="2"/><rect x="3" y="11" width="21" height="8" fill="#00b050" stroke="#0a5a2e" stroke-width="2"/><rect x="1" y="21" width="21" height="8" fill="#c00000" stroke="#600" stroke-width="2"/></svg>
        <span class="drop-t">Categorized</span><i class="tri-s tri-end"></i>
      </div>

      <div class="frow frow-val">
        <label class="drop-t">Value</label>
        <div class="input">
          <span class="abc-tag">abc</span><span class="val">TYPE</span>
          <span class="input-drop"><i class="tri-s"></i></span>
        </div>
        <button class="eps-btn"><span>ε</span></button>
      </div>

      <div class="frow frow-sym">
        <label class="drop-t">Symbol</label>
        <div class="bigbtn"><i class="sym-dot"></i></div>
        <span class="sdrop"><i class="tri-s"></i></span>
      </div>

      <div class="frow frow-ramp">
        <label class="drop-t">Color ramp</label>
        <div class="bigbtn bigbtn-ramp"><span class="drop-t">Random colors</span></div>
        <span class="sdrop sdrop-on"><i class="tri-s"></i></span>
      </div>

      <div class="table">
        <div class="thead">
          <span class="th-sym">Symbol<i class="th-tri"></i></span>
          <span class="th-val">V</span>
        </div>
        <div class="tbody">
          <div class="trow"><i class="cb"></i><i class="dot d1"></i><span class="tv">A</span></div>
          <div class="trow"><i class="cb"></i><i class="dot d2"></i><span class="tv">A</span></div>
          <div class="trow"><i class="cb"></i><i class="dot d3"></i><span class="tv">C</span></div>
          <div class="trow"><i class="cb"></i><i class="dot d4"></i><span class="tv">F</span></div>
          <div class="trow"><i class="cb"></i><i class="dot d5"></i><span class="tv">F</span></div>
          <div class="trow"><i class="cb"></i><i class="dot d6"></i><span class="tv">V</span></div>
          <div class="trow"><i class="cb"></i><i class="dot d7"></i><span class="tv">V</span></div>
          <div class="trow"><i class="cb"></i><i class="dot d8"></i><span class="tv tv-all">a</span></div>
        </div>
      </div>

      <div class="actions">
        <button class="btn btn-w">Classify</button>
        <button class="btn btn-i"><svg width="29" height="28" viewBox="0 0 29 28"><path d="M9 1h11v8h8v10h-8v8H9v-8H1V9h8z" fill="#fff" stroke="#4d8a52" stroke-width="2"/><path d="M11.500 4h6v7.500h7.500v5h-7.500V24h-6v-7.500H4v-5h7.500z" fill="#5f8f62"/></svg></button>
        <button class="btn btn-i"><svg width="27" height="12" viewBox="0 0 27 12"><rect width="27" height="12" fill="#ee5555"/><rect x="2" y="3" width="23" height="2" fill="#fff"/><rect x="2" y="8" width="23" height="1" fill="#fff" opacity=".5"/></svg></button>
        <button class="btn btn-w">Delete All</button>
        <button class="btn btn-w btn-adv">Advanced<i class="tri-xs"></i></button>
      </div>

      <div class="collapse"><i class="ar-big"></i><b>Layer Rendering</b></div>

      <div class="footer">
        <button class="btn btn-w">Help</button>
        <button class="btn btn-w btn-style"><span>Style</span><i class="tri-xs"></i></button>
        <button class="btn btn-w">Apply</button>
        <button class="btn btn-w btn-cancel">Cancel</button>
        <button class="btn btn-w btn-ok">OK</button>
      </div>
    </div>
  </div>

  <div class="popup">
    <div class="mi off"><span class="slot"></span>Invert Color Ramp</div>
    <div class="msep"></div>
    <div class="mi"><span class="slot"><i class="cb cb-m"></i></span>Random Color Ramp</div>
    <div class="mi"><span class="slot"></span>Shuffle Random Colors</div>
    <div class="msep"></div>
    <div class="mi"><span class="slot"><i class="sw blues"></i></span>Blues</div>
    <div class="mi"><span class="slot"><i class="sw greens"></i></span>Greens</div>
    <div class="mi"><span class="slot"><i class="sw greys"></i></span>Greys</div>
    <div class="mi"><span class="slot"><i class="sw magma"></i></span>Magma</div>
    <div class="mi"><span class="slot"><i class="sw rdgy"></i></span>RdGy</div>
    <div class="mi"><span class="slot"><i class="sw reds"></i></span>Reds</div>
    <div class="mi"><span class="slot"><i class="sw spectral"></i></span>Spectral</div>
    <div class="mi"><span class="slot"><i class="sw viridis"></i></span>Viridis</div>
    <div class="msep"></div>
    <div class="mi"><span class="slot"></span>All Color Ramps<i class="sub"></i></div>
    <div class="msep"></div>
    <div class="mi on"><span class="slot"></span>Create New Color Ramp...</div>
    <div class="mi off"><span class="slot"></span>Edit Color Ramp...</div>
    <div class="mi off"><span class="slot"></span>Save Color Ramp...</div>
  </div>
</section>
</body>
</html>
```

FILE: styles.css
```css
* { box-sizing: border-box; }
html, body { margin: 0; padding: 0; }
body {
  width: 2560px; height: 1450px; overflow: hidden; position: relative;
  font-family: "DejaVu Sans", sans-serif; font-size: 24.300px; color: #111;
  background:
    linear-gradient(90deg, #e0245e 0 535px, #1c6ca9 535px) top / 100% 200px no-repeat,
    linear-gradient(90deg, #1d3a6a 0 50%, #a01040 50%);
}
svg { display: block; flex: none; }
.defs { position: absolute; }
i { display: block; flex: none; font-style: normal; }
h1, h2, ul { margin: 0; padding: 0; list-style: none; font-weight: normal; }
button { font: inherit; color: inherit; margin: 0; padding: 0; }

/* macOS menu bar */
.menubar {
  height: 49px; display: flex; align-items: center; padding-left: 45px; position: relative; z-index: 5;
  font-family: Inter, sans-serif; font-size: 25.300px; font-weight: 500; color: #fff;
  text-shadow: 0 1px 3px rgba(0,0,0,.3);
  background: linear-gradient(90deg, #7e5b97 0, #5f6aa6 25%, #3d7ab3 45%, #2a78b3 60%, #1c6ca9 100%);
}
.apple { margin-right: 43px; }
.appname { font-weight: 700; font-size: 25.500px; margin-right: 45px; }
.menus { display: flex; gap: 41px; }
.tray { margin-left: auto; display: flex; align-items: center; gap: 38px; padding-right: 48px; }
.clock { font-size: 25.500px; margin-left: -10px; }

/* main QGIS window */
.mainwin {
  position: relative; height: 1401px; background: #ececec; border-radius: 16px;
  display: flex; flex-direction: column; overflow: hidden;
}
.titlebar {
  height: 57px; flex: none; background: #f6f0f2; border-bottom: 2px solid #d6d6d6;
  display: flex; align-items: center; gap: 16px; padding-left: 16px;
}
.light { width: 24px; height: 24px; border-radius: 50%; background: #dbd5d8; border: 1px solid #cfc9cc; }
.light-red { background: #fd5f57; border-color: #e4473f; }

.tb {
  flex: none; display: flex; align-items: center; padding-left: 10px;
  background: linear-gradient(#f6f6f6, #e9e9e9); border-bottom: 2px solid #b9b9b9;
}
.tb-a { height: 76px; gap: 24px; }
.tb-a .grip { margin-right: -2px; }
.tb-b { height: 77px; gap: 18px; }
.tb-b > .grip { margin-right: -3px; }
.tb-c { height: 77px; gap: 15px; }
.tb-c > .grip { margin-right: 0; }
.grip {
  width: 10px; height: 34px;
  background-image: radial-gradient(circle, #c4c4c4 1.3px, transparent 1.6px);
  background-size: 5px 6px;
}
.m-v { margin-left: 1px; margin-right: -8px; }
.tb-pencil {
  width: 64px; height: 60px; border: 2px solid #aaa; border-radius: 6px; padding: 3px 0 0 6px;
}
.tb-end { margin-left: auto; display: flex; align-items: center; }
.tb-end-a { padding-right: 359px; gap: 21px; }
.tb-box { width: 14px; height: 30px; border: 2px solid #aaa; background: #eef; }
.tb-end-b { padding-right: 292px; gap: 22px; }
.tri { width: 0; height: 0; border: 8px solid transparent; border-top: 10px solid #555; border-bottom: 0; }
.helpq { font-family: "Liberation Serif", serif; font-size: 30px; fill: #fff; text-anchor: middle; }
.eps-lg { font-family: "Liberation Serif", serif; font-size: 60px; fill: #6a3d80; }
.eps-md { font-family: "Liberation Serif", serif; font-size: 42px; fill: #6a3d80; }
.eps-nav { font-family: "Liberation Serif", serif; font-size: 82px; fill: #5c3272; }

.workarea { flex: 1; min-height: 0; display: flex; }
.docks { width: 266px; flex: none; display: flex; flex-direction: column; }
.dock { display: flex; flex-direction: column; min-height: 0; overflow: hidden; }
.dock-browser { height: 634px; }
.dock-layers { height: 422px; border-top: 2px solid #bbb; }
.dock-title { height: 44px; flex: none; font-size: 20.500px; line-height: 48px; padding-left: 9px; color: #222; }
.dock-title-l { height: 52px; line-height: 66px; }
.dock-tools { flex: none; height: 60px; display: flex; align-items: flex-start; gap: 20px; padding: 12px 0 0 17px; }
.dock-layers .dock-tools { height: 59px; padding-top: 13px; gap: 21px; }
.tree { flex: 1; min-height: 0; overflow: hidden; background: #fff; border: 1px solid #bbb; border-left-width: 2px; border-right: 0; padding-top: 1px; }
.row { height: 36px; display: flex; align-items: center; white-space: nowrap; }
.row.sel, .row-l.sel { background: #dcdcdc; }
.l0 { padding-left: 11px; }
.l1 { padding-left: 51px; }
.l2 { padding-left: 91px; }
.l3 { padding-left: 131px; }
.ar-d, .ar-r, .ar-none { width: 20px; height: 16px; flex: none; position: relative; }
.ar-d::before { content: ""; position: absolute; left: 2px; top: 4px; border: 8px solid transparent; border-top: 8px solid #555; border-bottom: 0; }
.ar-r::before { content: ""; position: absolute; left: 7px; top: 0; border: 8px solid transparent; border-left: 8px solid #555; border-right: 0; }
.ri { width: 32px; flex: none; margin-left: 15px; margin-right: 12px; display: flex; justify-content: center; }
.lrow { height: 72px; display: flex; align-items: center; padding-left: 86px; }
.row-l { height: 36px; display: flex; align-items: center; padding-left: 11px; white-space: nowrap; }
.row-l .cb { margin-left: 16px; }
.rsym { width: 32px; flex: none; margin-left: 12px; margin-right: 12px; display: flex; justify-content: center; }
.tree-layers { padding-top: 2px; }
.ln { width: 68px; height: 4px; background: #9f9f9f; margin: 0 13px 0 12px; }
.ln-blue { background: #a9a8f5; }
.ul { text-decoration: underline; text-underline-offset: 3px; }
.lsdot { width: 6px; height: 6px; border-radius: 50%; background: #e3c49f; border: 1px solid #c9a47a; }
.lsq { width: 32px; height: 32px; background: #e3b32f; border: 1px solid #a98a2a; }
.cb { width: 27px; height: 27px; position: relative; background: #fff; border: 2px solid #bdbdbd; flex: none; }
.cb::after {
  content: ""; position: absolute; left: 4px; top: 3px; width: 15px; height: 18px; background: #111;
  clip-path: polygon(0 52%, 20% 44%, 42% 72%, 80% 0, 100% 0, 50% 100%, 30% 100%);
}

.mapview { flex: 1; min-width: 0; margin-top: 4px; display: flex; justify-content: flex-end; align-items: flex-end; border-bottom: 2px solid #bdbdbd; overflow: hidden; }
.mapsvg { flex: none; }
.soft { filter: blur(.5px); }
.water { fill: #d4dade; }
.land { fill: #f9faf9; }
.road { fill: none; stroke: #e9ebeb; stroke-width: 1.500; vector-effect: non-scaling-stroke; }
.mway { fill: none; stroke: #dfe2e2; stroke-width: 3; vector-effect: non-scaling-stroke; }
.river { fill: none; stroke: #cfdbe4; stroke-width: 1.200; vector-effect: non-scaling-stroke; }
.dash { fill: none; stroke: #efc0ca; stroke-width: 1.200; stroke-dasharray: 3 4; vector-effect: non-scaling-stroke; }
.maplabels text { font-family: "Open Sans", sans-serif; font-size: 14px; fill: #98a2b2; filter: blur(.3px); }

.statusbar {
  height: 58px; flex: none; display: flex; align-items: center; padding: 6px 0 0 8px;
  background: linear-gradient(#eeeeee, #e6e6e6);
}
.locator {
  width: 258px; height: 46px; flex: none; background: #fff; border: 2px solid #c9c9c9; border-radius: 8px 0 0 8px; border-right: 0;
  display: flex; align-items: center; gap: 18px; padding-left: 15px; color: #8a8a8a; white-space: nowrap; overflow: hidden;
}
.status-right { margin-left: auto; display: flex; align-items: center; font-size: 20.700px; color: #222; padding-right: 14px; }
.cb-sm { margin-right: 12px; }
.st-render { margin-right: 32px; }
.st-globe { margin-right: 5px; }
.st-msg { margin-left: 47px; margin-top: -4px; }

/* dialog window */
.dialog {
  position: absolute; left: 266px; top: 49px; width: 1892px; height: 1401px; z-index: 2;
  background: #ececec; border-radius: 16px;
  box-shadow: -12px 6px 70px rgba(0,0,0,.32);
  display: flex; flex-direction: column;
}
.dlg-title {
  height: 57px; flex: none; display: flex; align-items: center; gap: 16px; padding-left: 16px;
  background: #f6f0f2; border-bottom: 2px solid #cfcfcf; border-radius: 16px 16px 0 0;
}
.dlg-title h1 {
  margin-left: 424px;
  font-family: Inter, sans-serif; font-size: 26.400px; font-weight: 600; color: #4a4547; white-space: nowrap;
}
.dlg-body { flex: 1; min-height: 0; display: flex; border-radius: 0 0 16px 16px; overflow: hidden; }
.nav { width: 299px; flex: none; display: flex; flex-direction: column; }
.nav-search { height: 47px; flex: none; background: #fff; border-bottom: 3px solid #b5b5b5; border-top: 2px solid #666; padding: 7px 0 0 17px; border-radius: 0 0 6px 6px; }
.nav-main { flex: 1; min-height: 0; display: flex; background: #5b5b5b; }
.nav-list { width: 272px; flex: none; padding-top: 12px; color: #f5f5f5; overflow: hidden; }
.nav-item { height: 72px; display: flex; align-items: center; position: relative; padding-left: 74px; font-size: 24px; line-height: 32px; white-space: nowrap; }
.nav-item span { padding-top: 2px; }
.nav-tall { height: 80px; }
.nav-item .ni { position: absolute; left: 9px; top: 50%; transform: translateY(-50%); }
.nav-sel { background: #ececec; color: #111; padding-left: 80px; }
.nav-sel .ni { left: 14px; }
.nav-scroll { width: 27px; flex: none; margin-top: 13px; display: flex; flex-direction: column; background: #fff; border-left: 1px solid #bbb; }
.sc-btn { height: 27px; flex: none; border-bottom: 2px solid #c8c8c8; display: flex; justify-content: center; align-items: center; }
.sc-up { width: 0; height: 0; border: 8px solid transparent; border-bottom: 9px solid #555; border-top: 0; }
.sc-track { flex: 1; background: linear-gradient(90deg, #fff, #f5f5f5); }
.sc-lower { height: 260px; flex: none; background: #ececec; border-top: 2px solid #c8c8c8; display: flex; align-items: flex-end; justify-content: center; padding-bottom: 8px; }
.sc-down { width: 0; height: 0; border: 8px solid transparent; border-top: 9px solid #555; border-bottom: 0; }

.pane { flex: 1; min-width: 0; display: flex; flex-direction: column; padding: 5px 7px 0 9px; position: relative; }
.split-dots {
  position: absolute; left: 3px; top: 658px; width: 4px; height: 34px;
  background-image: radial-gradient(circle, #c0c0c0 1px, transparent 1.2px); background-size: 4px 6px;
}
.drop-t { padding-top: 4px; }
.combo {
  height: 47px; flex: none; display: flex; align-items: center; padding-left: 15px;
  border: 2px solid #adadad; border-top-width: 3px; border-bottom-width: 3px; border-radius: 7px;
  background: linear-gradient(#ffffff, #eeeeee);
}
.cat-ic { margin-right: 10px; }
.tri-s { width: 0; height: 0; border: 8px solid transparent; border-top: 10px solid #555; border-bottom: 0; }
.tri-end { margin-left: auto; margin-right: 12px; }
.frow { display: flex; align-items: center; flex: none; }
.frow label { width: 148px; flex: none; }
.frow-val { height: 48px; margin-top: 13px; }
.frow-sym { height: 44px; margin-top: 12px; }
.frow-ramp { height: 55px; margin-top: 12px; }
.input {
  width: 1368px; height: 48px; display: flex; align-items: center; padding-left: 7px;
  background: #fff; border: 2px solid #b5b5b5; border-top-width: 3px; border-bottom-width: 3px; border-radius: 7px; overflow: hidden;
}
.abc-tag { font-size: 16px; color: #666; margin-right: 10px; padding-top: 1px; }
.val { color: #111; font-size: 25.800px; padding-top: 3px; }
.input-drop { margin-left: auto; width: 41px; align-self: stretch; display: flex; align-items: center; justify-content: center; border-left: 1px solid #ccc; background: #f4f4f4; }
.eps-btn {
  width: 47px; height: 48px; margin-left: 13px; display: flex; align-items: center; justify-content: center;
  border: 2px solid #b5b5b5; border-radius: 7px; background: linear-gradient(#fafafa, #eee);
  font-family: "Liberation Serif", serif; font-size: 46px; color: #5c3272; line-height: 1;
}
.bigbtn {
  width: 1404px; height: 100%; flex: none; display: flex; align-items: center; justify-content: center;
  border: 2px solid #b5b5b5; border-top-width: 3px; border-bottom-width: 3px; border-radius: 7px;
  background: linear-gradient(#fff, #f4f4f4);
}
.bigbtn-ramp { color: #333; }
.sym-dot { width: 8px; height: 12px; border-radius: 50%; background: #e8ae5f; border: 1px solid #bbb; margin-bottom: 6px; }
.sdrop { width: 23px; height: 100%; margin-left: 2px; flex: none; display: flex; align-items: center; justify-content: center; border: 2px solid #bdbdbd; border-radius: 6px; background: #f6f6f6; }
.sdrop-on { background: #d6d6d6; }

.table { flex: 1; min-height: 0; margin-top: 13px; display: flex; flex-direction: column; background: #fff; border: 1px solid #bbb; margin-right: 1px; }
.thead { height: 33px; flex: none; display: flex; background: linear-gradient(#f4f4f4, #e9e9e9); border-bottom: 2px solid #c4c4c4; font-size: 20.500px; line-height: 38px; color: #222; overflow: hidden; }
.th-sym { width: 131px; flex: none; padding-left: 6px; border-right: 2px solid #c4c4c4; position: relative; }
.th-val { padding-left: 6px; }
.th-tri { position: absolute; right: 6px; top: 10px; width: 0; height: 0; border: 7px solid transparent; border-top: 8px solid #444; border-bottom: 0; }
.tbody { flex: 1; padding-top: 3px; }
.trow { height: 36px; display: flex; align-items: center; padding-left: 7px; position: relative; }
.dot { width: 10px; height: 10px; border-radius: 50%; position: absolute; left: 58px; top: 7px; }
.d1 { background: #b2ce6d; } .d2 { background: #e4355f; } .d3 { background: #8f78c8; } .d4 { background: #d87be0; }
.d5 { background: #6fc46e; } .d6 { background: #3f86c8; } .d7 { background: #4fcfae; } .d8 { background: #d9a063; }
.tv { position: absolute; left: 138px; width: 9px; overflow: hidden; white-space: nowrap; }
.tv-all { font-style: italic; color: #888; }

.actions { height: 47px; flex: none; margin-top: 14px; display: flex; gap: 13px; }
.btn {
  height: 47px; display: flex; align-items: center; justify-content: center; flex: none; padding-bottom: 2px;
  border: 2px solid #b0b0b0; border-bottom-width: 3px; border-radius: 7px; background: linear-gradient(#fdfdfd, #efefef); color: #222;
}
.btn-w { width: 159px; }
.btn-i { width: 55px; }
.btn-adv { margin-left: auto; gap: 8px; }
.tri-xs { width: 0; height: 0; border: 5px solid transparent; border-top: 7px solid #666; border-bottom: 0; }
.btn-style { position: relative; padding-right: 24px; }
.btn-style .tri-xs { position: absolute; right: 9px; top: 18px; }
.collapse { height: 40px; flex: none; margin-top: 9px; margin-bottom: 2px; display: flex; align-items: center; padding-left: 10px; font-size: 23.200px; }
.ar-big { width: 0; height: 0; border: 10px solid transparent; border-left: 14px solid #333; border-right: 0; margin-right: 19px; }
.footer { height: 47px; flex: none; margin-top: 10px; display: flex; gap: 13px; }
.btn-cancel { margin-left: auto; }
.btn-ok { border-color: #5a9fe6; background: linear-gradient(#fafbfd, #d9e2ef); }

/* colour ramp menu */
.popup {
  position: absolute; left: 457px; top: 294px; width: 502px; height: 737px; overflow: hidden; z-index: 3;
  background: #fff; border: 2px solid #a6a6a6; box-shadow: 0 6px 24px rgba(0,0,0,.3); color: #222;
}
.mi { height: 48px; display: flex; align-items: center; padding-left: 10px; position: relative; white-space: nowrap; font-size: 23.900px; }
.slot { width: 43px; flex: none; display: flex; align-items: center; }
.off { color: #bdbdbd; }
.on { background: #7ca4ea; color: #fff; }
.msep { height: 4px; position: relative; margin: 0 9px 0 7px; }
.msep::before { content: ""; position: absolute; left: 0; right: 0; top: 0; height: 1px; background: #c8c8c8; }
.cb-m { margin-left: 3px; }
.sw { width: 32px; height: 32px; margin-left: 1px; }
.sub { position: absolute; right: 11px; top: 17px; width: 0; height: 0; border: 7px solid transparent; border-left: 8px solid #555; border-right: 0; }
.blues { background: linear-gradient(90deg, #f7fbff, #c6dbef 25%, #6baed6 55%, #2171b5 80%, #08519c); }
.greens { background: linear-gradient(90deg, #f7fcf5, #c7e9c0 25%, #74c476 55%, #238b45 80%, #00441b); }
.greys { background: linear-gradient(90deg, #fafafa, #bdbdbd 30%, #737373 60%, #252525 90%, #111); }
.magma { background: linear-gradient(90deg, #000004, #2c115f 20%, #721f81 40%, #d3436e 65%, #fc8961 85%, #fcfdbf); }
.rdgy { background: linear-gradient(90deg, #ca0020, #f4a582 25%, #ffffff 50%, #bababa 75%, #404040); }
.reds { background: linear-gradient(90deg, #fff5f0, #fcbba1 25%, #fb6a4a 55%, #ef3b2c 75%, #a50f15); }
.spectral { background: linear-gradient(90deg, #d7191c, #fdae61 25%, #ffffbf 50%, #abdda4 75%, #2b83ba); }
.viridis { background: linear-gradient(90deg, #440154, #31688e 35%, #21918c 55%, #5ec962 80%, #fde725); }

.abc { font-family: "DejaVu Sans", sans-serif; font-weight: 700; font-size: 19px; fill: #1d2a3a; }
.abc-m { font-size: 25px; font-weight: 400; fill: #202a3c; }
```
